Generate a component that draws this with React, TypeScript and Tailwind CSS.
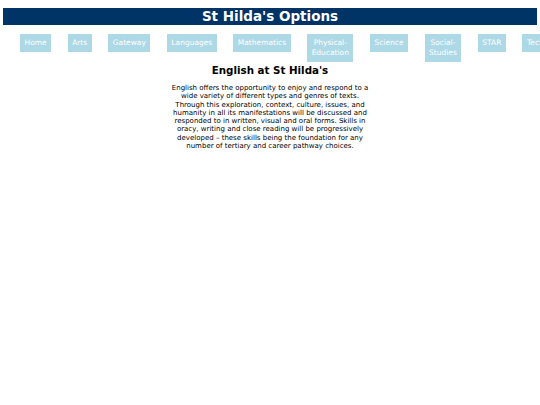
import React from 'react';

const links = [
  'Home',
  'Arts',
  'Gateway',
  'Languages',
  'Mathematics',
  'Physical-Education',
  'Science',
  'Social-Studies',
  'STAR',
  'Technology',
];

export default function App() {
  return (
    <div className="min-h-[405px] w-[540px] overflow-hidden bg-white pt-2 font-['DejaVu_Sans',Verdana,sans-serif]">
      <header className="mx-[3px] h-[17px] bg-[#003366] text-center text-[13.5px] font-bold leading-[17px] text-white">
        St Hilda's Options
      </header>

      <nav className="mt-[9px] flex items-start gap-[16.5px] pl-[20px]">
        {links.map((label) => (
          <a
            key={label}
            href="#"
            className="shrink bg-[#add8e6] px-[4.5px] py-[4px] text-center text-[7.5px] leading-[10px] text-white"
          >
            {label}
          </a>
        ))}
      </nav>

      <main className="flex flex-col items-center">
        <h1 className="mt-[2px] text-[10.3px] font-bold leading-[12px] text-black">English at St Hilda's</h1>
        <p className="mt-[8px] w-[200px] text-center text-[7px] leading-[8.3px] text-black">
          English offers the opportunity to enjoy and respond to a wide variety of different types and genres
          of texts. Through this exploration, context, culture, issues, and humanity in all its manifestations
          will be discussed and responded to in written, visual and oral forms. Skills in oracy, writing and
          close reading will be progressively developed – these skills being the foundation for any number of
          tertiary and career pathway choices.
        </p>
      </main>
    </div>
  );
}
